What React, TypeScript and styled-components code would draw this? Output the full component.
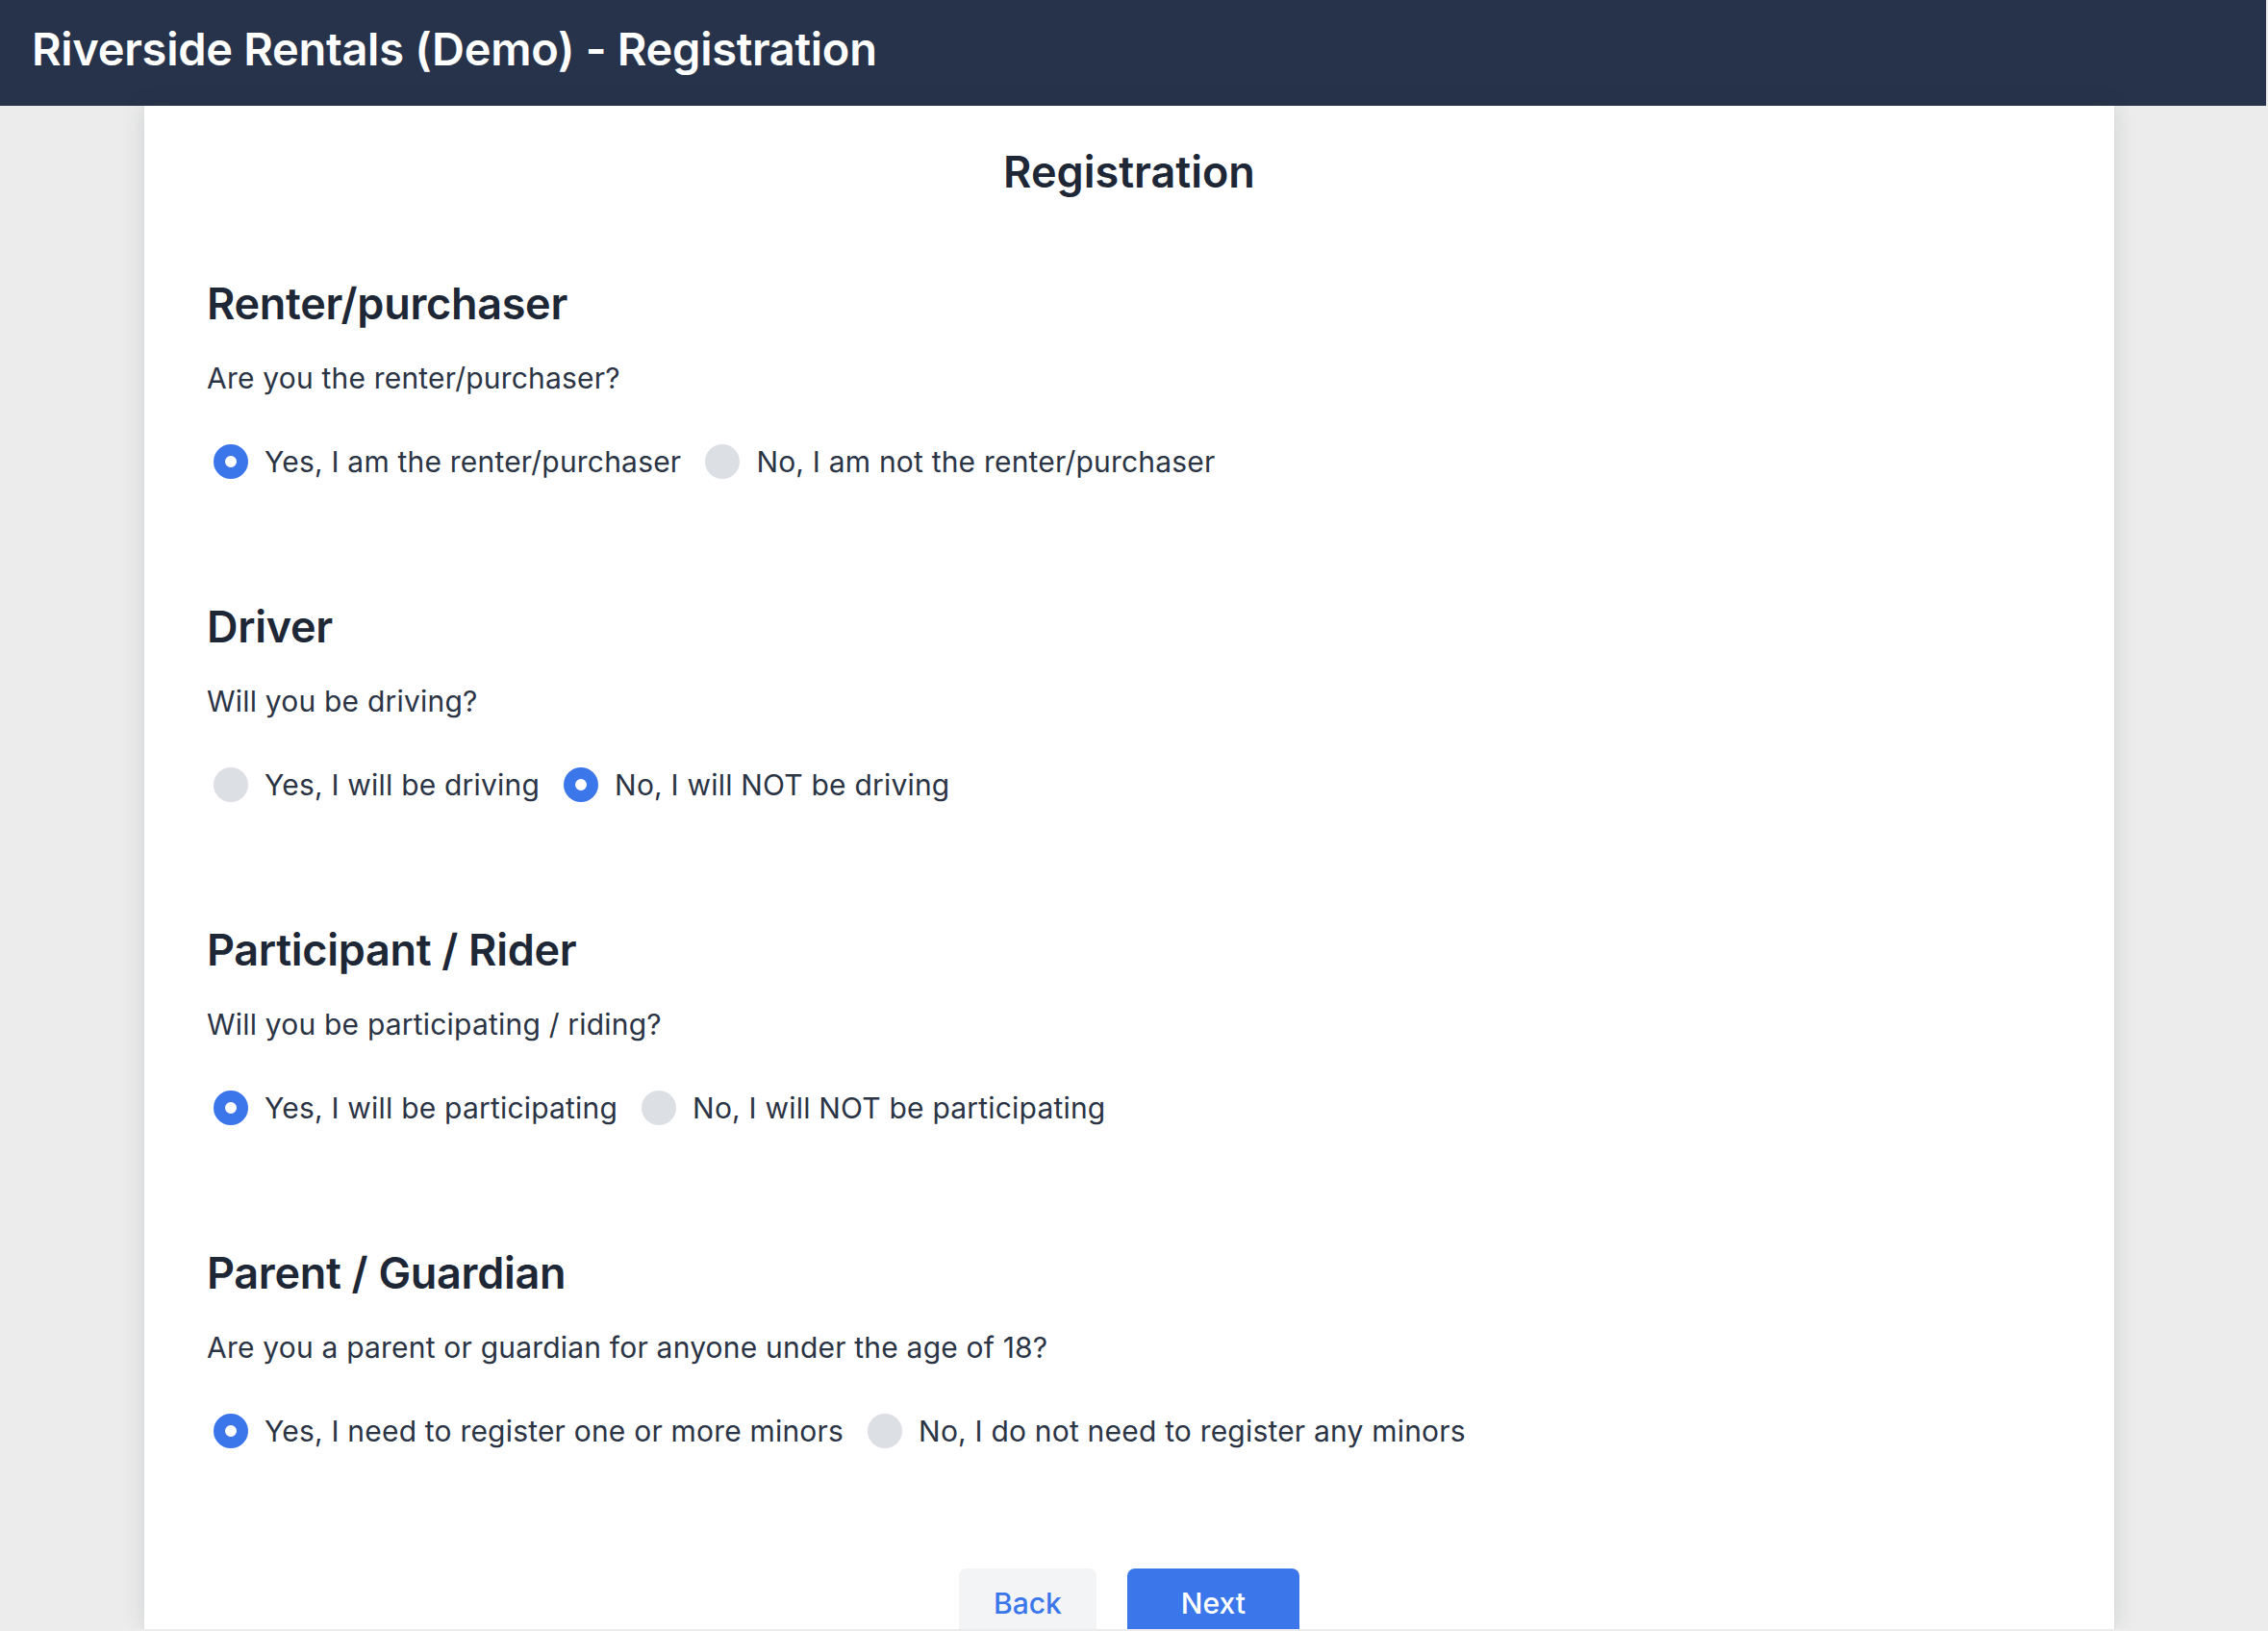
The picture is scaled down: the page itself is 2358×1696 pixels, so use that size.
import * as React from 'react';
import styled, { createGlobalStyle } from 'styled-components';

interface OptionInterface {
    label: string;
    checked: boolean;
}

interface SectionInterface {
    title: string;
    question: string;
    options: OptionInterface[];
}

const sections: SectionInterface[] = [
    {
        title: 'Renter/purchaser',
        question: 'Are you the renter/purchaser?',
        options: [
            { label: 'Yes, I am the renter/purchaser', checked: true },
            { label: 'No, I am not the renter/purchaser', checked: false },
        ],
    },
    {
        title: 'Driver',
        question: 'Will you be driving?',
        options: [
            { label: 'Yes, I will be driving', checked: false },
            { label: 'No, I will NOT be driving', checked: true },
        ],
    },
    {
        title: 'Participant / Rider',
        question: 'Will you be participating / riding?',
        options: [
            { label: 'Yes, I will be participating', checked: true },
            { label: 'No, I will NOT be participating', checked: false },
        ],
    },
    {
        title: 'Parent / Guardian',
        question: 'Are you a parent or guardian for anyone under the age of 18?',
        options: [
            { label: 'Yes, I need to register one or more minors', checked: true },
            { label: 'No, I do not need to register any minors', checked: false },
        ],
    },
];

const GlobalStyle = createGlobalStyle`
    html, body {
        margin: 0;
        padding: 0;
        background: #ececec;
        font-family: Inter, "Noto Sans", "Liberation Sans", sans-serif;
    }
`;

const Page = styled.div`
    height: 1694px;
    display: flex;
    flex-direction: column;
    overflow: hidden;
`;

const TopBar = styled.header`
    flex: 0 0 110px;
    display: flex;
    align-items: center;
    padding: 0 0 9px 33px;
    box-sizing: border-box;
    margin-right: 2px;
    background: #27334a;
    h1 {
        margin: 0;
        color: #fff;
        font-size: 47px;
        font-weight: 600;
        letter-spacing: -0.3px;
    }
`;

const Main = styled.main`
    flex: 1;
    display: flex;
    justify-content: center;
    padding-right: 10px;
    min-height: 0;
`;

const Card = styled.div`
    width: 2048px;
    box-sizing: border-box;
    background: #fff;
    padding: 42px 65px 0;
    box-shadow: 0 0 22px rgba(30, 40, 60, 0.14);
`;

const Title = styled.h2`
    margin: 0;
    text-align: center;
    color: #1e2736;
    font-size: 45px;
    line-height: 54px;
    font-weight: 600;
`;

const Section = styled.section`
    margin-top: 83px;
    & + & {
        margin-top: 124px;
    }
`;

const Heading = styled.h3`
    margin: 0;
    color: #1e2736;
    font-size: 45px;
    line-height: 54px;
    font-weight: 600;
    letter-spacing: -0.3px;
`;

const Question = styled.p`
    margin: 29px 0 0;
    color: #2b3445;
    font-size: 30px;
    line-height: 42px;
    letter-spacing: 0.2px;
`;

const RadioRow = styled.div`
    margin: 45px 0 0 7px;
    display: flex;
    align-items: center;
    gap: 25px;
`;

const RadioItem = styled.label`
    display: flex;
    align-items: center;
    gap: 17px;
    color: #2b3445;
    font-size: 30px;
    line-height: 42px;
    letter-spacing: 0.2px;
`;

const Dot = styled.span<{ $checked: boolean }>`
    width: 36px;
    height: 36px;
    border-radius: 50%;
    flex: 0 0 36px;
    box-sizing: border-box;
    background: ${props => props.$checked ? '#fff' : '#dcdfe4'};
    border: ${props => props.$checked ? '12px solid #3b77ea' : 'none'};
`;

const Actions = styled.div`
    margin-top: 122px;
    display: flex;
    justify-content: center;
    gap: 32px;
`;

const Button = styled.button<{ $primary?: boolean }>`
    height: 72px;
    padding: ${props => props.$primary ? '0 56px' : '0 36px'};
    border: none;
    border-radius: 8px;
    font-family: inherit;
    font-size: 30px;
    font-weight: 500;
    background: ${props => props.$primary ? '#3b77ea' : '#f3f4f6'};
    color: ${props => props.$primary ? '#fff' : '#3b77ea'};
`;

export default function App() {
    return (
        <Page>
            <GlobalStyle />
            <TopBar>
                <h1>Riverside Rentals (Demo) - Registration</h1>
            </TopBar>
            <Main>
                <Card>
                    <Title>Registration</Title>
                    {sections.map(section => (
                        <Section key={section.title}>
                            <Heading>{section.title}</Heading>
                            <Question>{section.question}</Question>
                            <RadioRow>
                                {section.options.map(option => (
                                    <RadioItem key={option.label}>
                                        <Dot $checked={option.checked} />
                                        {option.label}
                                    </RadioItem>
                                ))}
                            </RadioRow>
                        </Section>
                    ))}
                    <Actions>
                        <Button>Back</Button>
                        <Button $primary>Next</Button>
                    </Actions>
                </Card>
            </Main>
        </Page>
    );
}
